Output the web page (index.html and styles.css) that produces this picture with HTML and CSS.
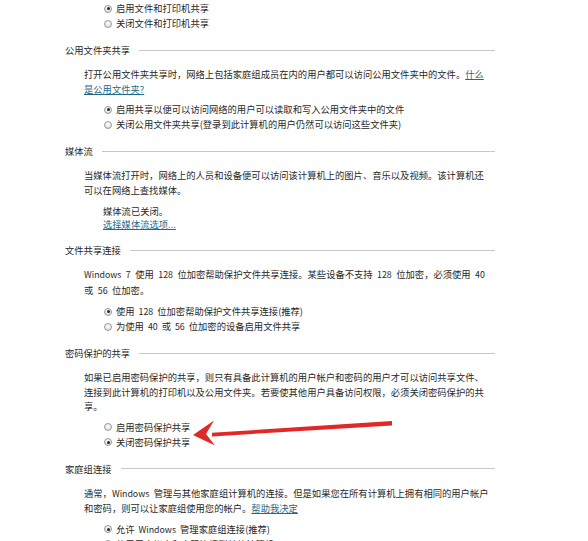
FILE: index.html
```html
<!DOCTYPE html>
<html lang="zh-CN">
<head>
<meta charset="utf-8">
<title>高级共享设置</title>
<link rel="stylesheet" href="styles.css">
</head>
<body>
<div class="page">
  <div class="options first">
    <div class="opt"><span class="radio on"></span>启用文件和打印机共享</div>
    <div class="opt"><span class="radio"></span>关闭文件和打印机共享</div>
  </div>

  <section class="sec">
    <div class="sec-head">公用文件夹共享</div>
    <p class="desc">打开公用文件夹共享时，网络上包括家庭组成员在内的用户都可以访问公用文件夹中的文件。<a href="#">什么<br>是公用文件夹?</a></p>
    <div class="options">
      <div class="opt"><span class="radio on"></span>启用共享以便可以访问网络的用户可以读取和写入公用文件夹中的文件</div>
      <div class="opt"><span class="radio"></span>关闭公用文件夹共享(登录到此计算机的用户仍然可以访问这些文件夹)</div>
    </div>
  </section>

  <section class="sec">
    <div class="sec-head">媒体流</div>
    <p class="desc">当媒体流打开时，网络上的人员和设备便可以访问该计算机上的图片、音乐以及视频。该计算机还<br>可以在网络上查找媒体。</p>
    <div class="status">
      <div>媒体流已关闭。</div>
      <a href="#">选择媒体流选项...</a>
    </div>
  </section>

  <section class="sec">
    <div class="sec-head">文件共享连接</div>
    <p class="desc"><span class="lat">Windows 7</span> 使用 <span class="lat">128</span> 位加密帮助保护文件共享连接。某些设备不支持 <span class="lat">128</span> 位加密，必须使用 <span class="lat">40</span><br>或 <span class="lat">56</span> 位加密。</p>
    <div class="options">
      <div class="opt"><span class="radio on"></span>使用 <span class="lat">128</span> 位加密帮助保护文件共享连接(推荐)</div>
      <div class="opt"><span class="radio"></span>为使用 <span class="lat">40</span> 或 <span class="lat">56</span> 位加密的设备启用文件共享</div>
    </div>
  </section>

  <section class="sec">
    <div class="sec-head">密码保护的共享</div>
    <p class="desc">如果已启用密码保护的共享，则只有具备此计算机的用户帐户和密码的用户才可以访问共享文件、<br>连接到此计算机的打印机以及公用文件夹。若要使其他用户具备访问权限，必须关闭密码保护的共<br>享。</p>
    <div class="options">
      <div class="opt"><span class="radio"></span>启用密码保护共享</div>
      <div class="opt"><span class="radio on"></span>关闭密码保护共享</div>
    </div>
  </section>

  <section class="sec">
    <div class="sec-head">家庭组连接</div>
    <p class="desc">通常，<span class="lat">Windows</span> 管理与其他家庭组计算机的连接。但是如果您在所有计算机上拥有相同的用户帐户<br>和密码，则可以让家庭组使用您的帐户。<a href="#">帮助我决定</a></p>
    <div class="options">
      <div class="opt"><span class="radio on"></span>允许 <span class="lat">Windows</span> 管理家庭组连接(推荐)</div>
      <div class="opt"><span class="radio"></span>使用用户帐户和密码连接到其他计算机</div>
    </div>
  </section>

  <svg class="arrow" width="588" height="541" viewBox="0 0 588 541" aria-hidden="true">
    <polygon points="392,421 392,425.5 212,436.4 212,432.8" fill="#e32626"/>
    <polygon points="193,435 214,420.5 206,434 215,445.5" fill="#e02a2a"/>
  </svg>
</div>
</body>
</html>
```

FILE: styles.css
```css
html, body {
  margin: 0;
  padding: 0;
  background: #ffffff;
}

body {
  font-family: "Noto Sans CJK SC", "Noto Sans", sans-serif;
  font-size: 9.3px;
  color: #282828;
  word-spacing: 2.4px;
}

.page {
  position: relative;
  width: 430px;
  height: 541px;
  padding: 1px 0 0 65px;
  box-sizing: content-box;
  overflow: hidden;
}

.lat {
  font-size: 8.8px;
}

a {
  color: #1d6a8a;
  text-decoration: underline;
}

.options {
  padding-left: 39px;
  margin-top: 6px;
}

.options.first {
  margin-top: 0;
}

.opt {
  display: flex;
  align-items: center;
  gap: 4px;
  height: 15px;
  line-height: 15px;
  white-space: nowrap;
}

.radio {
  position: relative;
  flex: none;
  width: 8px;
  height: 8px;
  box-sizing: border-box;
  border-radius: 50%;
  border: 1px solid #9a9a9a;
  background: radial-gradient(circle at 50% 35%, #ffffff 0%, #e6e6e6 60%, #cfcfcf 100%);
}

.radio.on::after {
  content: "";
  position: absolute;
  left: 1.5px;
  top: 1.5px;
  width: 3px;
  height: 3px;
  border-radius: 50%;
  background: #1f2a36;
}

.sec {
  margin-top: 12px;
}

.sec-head {
  display: flex;
  align-items: center;
  gap: 9px;
  line-height: 14px;
  white-space: nowrap;
}

.sec-head::after {
  content: "";
  flex: 1;
  height: 1px;
  background: #c8c8c8;
}

.desc {
  margin: 10px 0 0 19px;
  line-height: 14.5px;
  white-space: nowrap;
}

.status {
  margin: 8px 0 8px 38px;
  line-height: 13px;
}

.status a {
  display: block;
}

.arrow {
  position: absolute;
  left: 0;
  top: 0;
  pointer-events: none;
}
```
